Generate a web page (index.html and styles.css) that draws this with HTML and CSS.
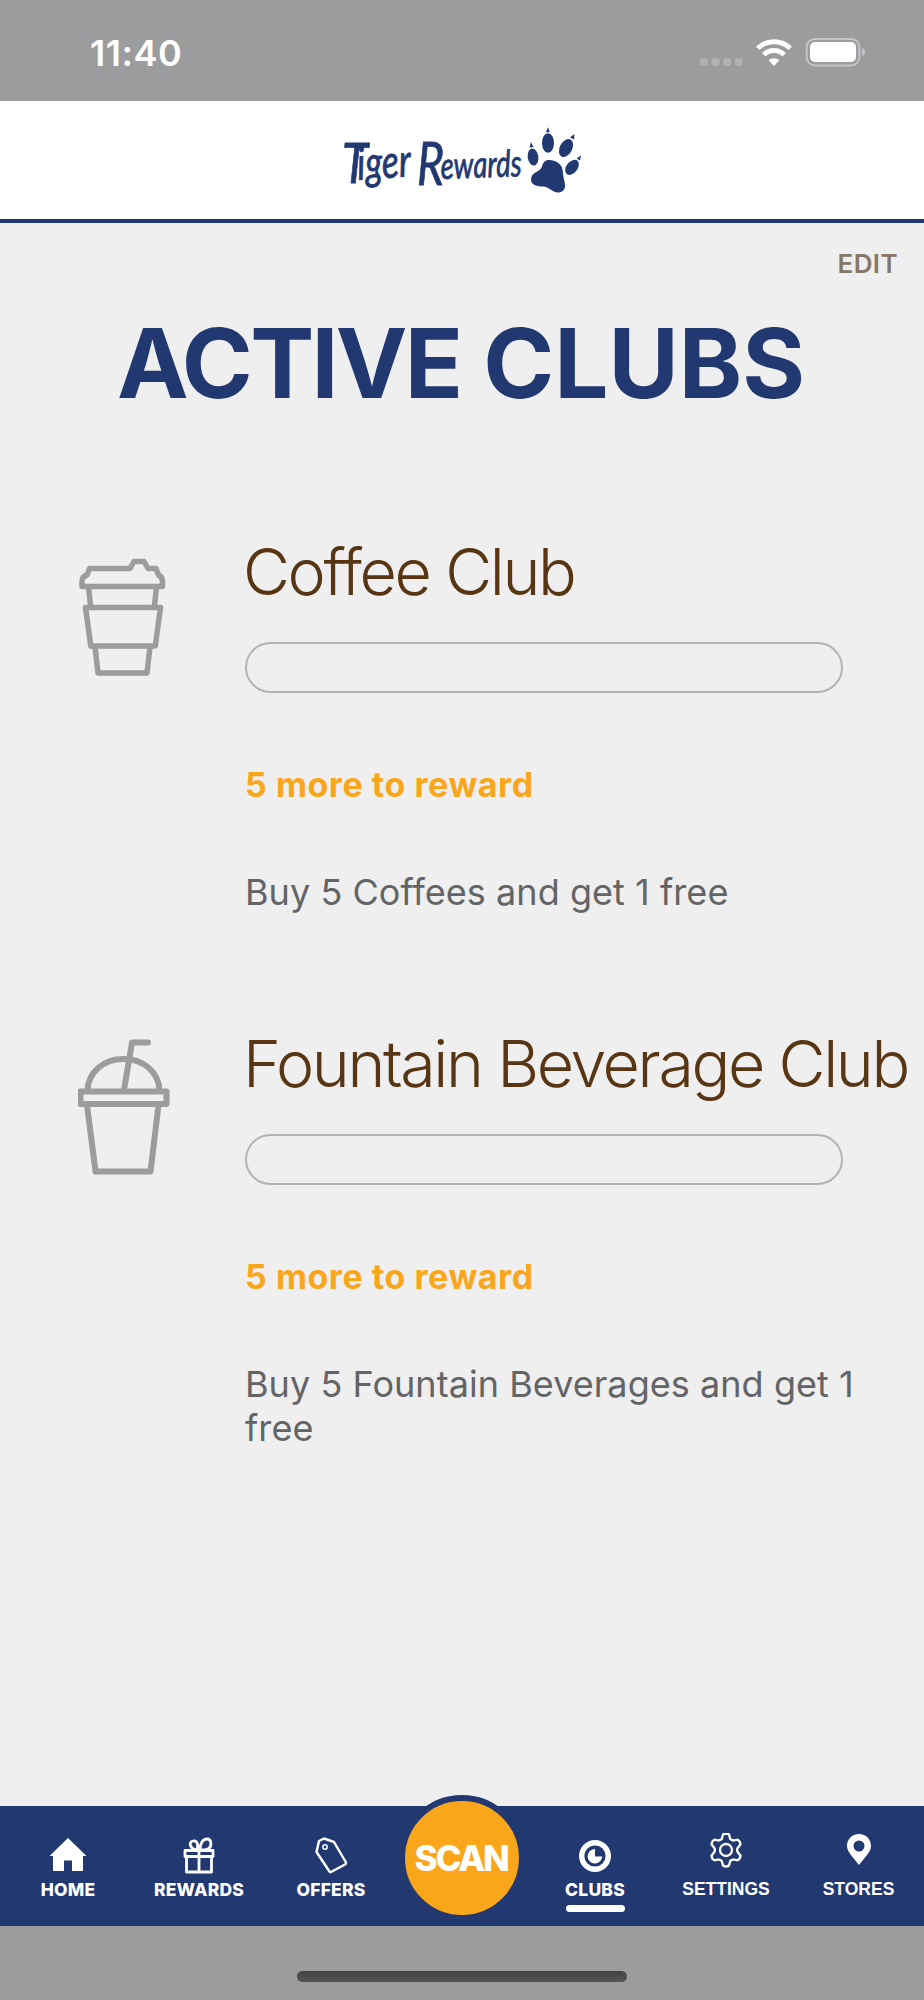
FILE: index.html
```html
<!DOCTYPE html>
<html lang="en">
<head>
    <meta charset="UTF-8">
    <meta name="viewport" content="width=device-width, initial-scale=1.0">
    <title>Tiger Rewards - Active Clubs</title>
    <link rel="stylesheet" href="styles.css">
</head>
<body>
    <div class="status-bar">
        <span class="time">11:40</span>
        <svg class="status-icons" width="168" height="32" viewBox="0 0 168 32">
            <g fill="#b0b1b3">
                <rect x="0" y="20" width="8" height="8" rx="3"/>
                <rect x="11.500" y="20" width="8" height="8" rx="3"/>
                <rect x="23" y="20" width="8" height="8" rx="3"/>
                <rect x="34.500" y="20" width="8" height="8" rx="3"/>
            </g>
            <g fill="none" stroke="#fff" stroke-width="5">
                <path d="M57.700 10.300a23.500 23.500 0 0 1 32.600 0"/>
                <path d="M63.800 16.700a14.800 14.800 0 0 1 20.400 0"/>
            </g>
            <path d="M68.500 22.300a8.500 8.500 0 0 1 11 0L74 28z" fill="#fff"/>
            <rect x="106.800" y="1" width="52.500" height="26.500" rx="8" fill="none" stroke="#c3c4c5" stroke-width="2"/>
            <rect x="110" y="4" width="46" height="20" rx="5" fill="#fff"/>
            <path d="M162 10q3 1 3 4t-3 4z" fill="#c3c4c5"/>
        </svg>
    </div>

    <header class="header">
        <svg class="logo" width="240" height="70" viewBox="0 0 240 70">
            <g class="logo-text">
                <text x="-4" y="57" font-size="57" textLength="26" lengthAdjust="spacingAndGlyphs">T</text>
                <text x="12" y="54" font-size="46" textLength="54" lengthAdjust="spacingAndGlyphs" transform="rotate(-4 12 54)">iger</text>
                <text x="71" y="59" font-size="60" textLength="27" lengthAdjust="spacingAndGlyphs">R</text>
                <text x="95" y="53" font-size="37" textLength="81" lengthAdjust="spacingAndGlyphs" transform="rotate(-2 95 53)">ewards</text>
            </g>
            <g fill="#223871">
                <ellipse cx="187" cy="31" rx="5.300" ry="8.600" transform="rotate(-8 187 31)"/>
                <ellipse cx="202" cy="17" rx="6" ry="9.800"/>
                <ellipse cx="220" cy="22" rx="6.200" ry="9.600" transform="rotate(28 220 22)"/>
                <ellipse cx="226" cy="41.300" rx="5.600" ry="8.500" transform="rotate(38 226 41.300)"/>
                <path d="M183.500 21.500l1.500-5.500 2.500 5zM199.800 6.200l2.200-5 1.800 5zM224 11.500l4.500-3.500-.500 5.500zM230.500 32.500l4.500-3-1 5z"/>
                <path d="M203 34c8 0 14 5 14 13 0 4 2 8 2 13 0 4-3 6.500-7 6.500-6 0-9-6-15-6-5 0-12-1-12-7 0-8 9-7 11-13 1-4 3-6.500 7-6.500z"/>
            </g>
        </svg>
    </header>

    <main class="content">
        <a class="edit" href="#">EDIT</a>
        <h1 class="title"><span class="title-tight">ACTIVE</span> CLUBS</h1>

        <section class="club">
            <div class="club-icon">
                <svg width="92" height="140" viewBox="0 0 92 140" fill="none" stroke="#9b9c9e" stroke-width="5.500" stroke-linejoin="round">
                    <path d="M4 35.500v-5q0-5 5-6.500l2.500-6.500H52l4-7H66l4 7h8l2.500 6.500q4 2 4 6.500v5z"/>
                    <path d="M10.500 36l2.200 20M78.500 36l-2.200 20M7.500 56.500h75l-5.200 38.500h-64.500zM17 96l3 26h49l3-26"/>
                </svg>
            </div>
            <div class="club-info">
                <h2 class="club-name">Coffee Club</h2>
                <div class="progress"></div>
                <p class="remaining">5 more to reward</p>
                <p class="description">Buy 5 Coffees and get 1 free</p>
            </div>
        </section>

        <section class="club">
            <div class="club-icon fountain">
                <svg width="92" height="140" viewBox="0 0 92 140" fill="none" stroke="#9b9c9e" stroke-width="6" stroke-linejoin="round" stroke-linecap="round">
                    <rect x="2.500" y="53.500" width="86" height="12.500"/>
                    <path d="M9.500 52c1-18 16-31 36-31s35 13 36 31M46 52l8-47.500h16M9 67l8.500 66.500h55l8-66.500"/>
                </svg>
            </div>
            <div class="club-info">
                <h2 class="club-name">Fountain Beverage Club</h2>
                <div class="progress"></div>
                <p class="remaining">5 more to reward</p>
                <p class="description">Buy 5 Fountain Beverages and get 1 free</p>
            </div>
        </section>
    </main>

    <nav class="tab-bar">
        <a class="tab" href="#">
            <svg width="38" height="40" viewBox="0 0 38 40" fill="#fff"><path d="M19 2L37.500 20H34v15H23V24.500h-8V35H4V20H.500z"/></svg>
            <span>HOME</span>
        </a>
        <a class="tab" href="#">
            <svg width="32" height="40" viewBox="0 0 32 40" fill="none" stroke="#fff" stroke-width="2.800" stroke-linejoin="round">
                <path d="M3.500 20.500h25v15.500h-25zM2 14.500h28v6H2zM16 14v22M14 14c-7-1-9-8-4-9 4-1 6 4 4 9zM17 14c0-7 3-11 7-11 5 0 5 8 1 10-2 1-5 1-8 1z"/>
            </svg>
            <span>REWARDS</span>
        </a>
        <a class="tab" href="#">
            <svg width="34" height="40" viewBox="0 0 34 40" fill="none" stroke="#fff" stroke-width="2.400" stroke-linejoin="round">
                <path d="M5 5l5-2.500L20 6l12 20.500q0 1.500-1 2L17 36q-1 .500-1.500-.500L2.500 16z"/>
                <circle cx="11" cy="11" r="2.200" stroke-width="1.500"/>
            </svg>
            <span>OFFERS</span>
        </a>
        <a class="scan" href="#">SCAN</a>
        <a class="tab active" href="#">
            <svg width="34" height="40" viewBox="0 0 34 40">
                <circle cx="17" cy="20" r="13.300" fill="none" stroke="#fff" stroke-width="5.400"/>
                <path d="M17 13a7.300 7.300 0 1 0 7.200 7.500H17z" fill="#fff"/>
            </svg>
            <span>CLUBS</span>
        </a>
        <a class="tab settings" href="#">
            <svg width="32" height="40" viewBox="0 0 32 40" fill="none" stroke="#fff" stroke-width="2.300" stroke-linejoin="round">
                <path d="M13 1.500Q16-.500 19 1.500l1.200 4.500q2 1.500 3.800 1.500l3.500-.800q2.500 1 3 4.500l-3 4q-.800 1.800 0 3.600l3 4q-.500 3.500-3 4.500l-3.500-.800q-2 0-3.800 1.500L19 32.500q-3 2-6 0L11.800 28q-2-1.500-3.800-1.500l-3.500.800q-2.500-1-3-4.500l3-4q.800-1.800 0-3.600l-3-4q.500-3.500 3-4.500L8 7.500q2 0 3.800-1.500z"/>
                <circle cx="16" cy="17" r="6"/>
            </svg>
            <span>SETTINGS</span>
        </a>
        <a class="tab stores" href="#">
            <svg width="26" height="40" viewBox="0 0 26 40"><path d="M13 1C6 1 1 6 1 13c0 6 6 11 12 19 6-8 12-13 12-19C25 6 20 1 13 1zm0 6.500a5.500 5.500 0 1 1 0 11 5.500 5.500 0 0 1 0-11z" fill="#fff" fill-rule="evenodd"/></svg>
            <span>STORES</span>
        </a>
    </nav>

    <div class="home-area"><div class="home-indicator"></div></div>
</body>
</html>
```

FILE: styles.css
```css
* {
    box-sizing: border-box;
}
body {
    margin: 0;
    width: 924px;
    height: 2000px;
    display: flex;
    flex-direction: column;
    overflow: hidden;
    background-color: #efefef;
    font-family: Inter, "Liberation Sans", sans-serif;
}
a {
    text-decoration: none;
}
.status-bar {
    height: 101px;
    padding: 0 56px 0 90px;
    display: flex;
    justify-content: space-between;
    background-color: #9b9c9e;
}
.time {
    margin-top: 31px;
    font-size: 36px;
    line-height: 44px;
    font-weight: 600;
    letter-spacing: 0.5px;
    color: #fff;
}
.status-icons {
    margin-top: 38px;
}
.header {
    height: 122px;
    padding: 25px 0 0 8px;
    background-color: #fff;
    border-bottom: 4px solid #223871;
    text-align: center;
}
.logo {
    overflow: visible;
}
.logo-text {
    font-family: Lato, sans-serif;
    font-style: italic;
    fill: #223871;
    stroke: #223871;
    stroke-width: 0.8px;
}
.content {
    flex: 1;
    display: flex;
    flex-direction: column;
}
.edit {
    align-self: flex-end;
    margin: 25px 26px 0 0;
    font-size: 26px;
    line-height: 32px;
    font-weight: 600;
    letter-spacing: 0.4px;
    color: #857866;
}
.title {
    margin: 25px 0 0;
    padding-right: 2px;
    font-size: 96px;
    line-height: 116px;
    font-weight: 700;
    letter-spacing: 0;
    text-align: center;
    white-space: nowrap;
    color: #223871;
}
.title-tight {
    letter-spacing: -2.7px;
}
.club {
    height: 492px;
    display: flex;
}
.title + .club {
    margin-top: 112px;
}
.club-icon {
    width: 245px;
    padding: 18px 0 0 78px;
}
.club-icon.fountain {
    padding-top: 13px;
}
.club-info {
    flex: 1;
    min-width: 0;
    font-variant-ligatures: none;
}
.club-name {
    margin: 0 0 0 -2px;
    padding-top: 0;
    font-size: 64.5px;
    line-height: 78px;
    font-weight: 300;
    letter-spacing: -2.4px;
    white-space: nowrap;
    color: #583614;
}
.progress {
    width: 598px;
    height: 51px;
    margin-top: 31px;
    border: 2px solid #b2b3b3;
    border-radius: 26px;
}
.remaining {
    margin: 70px 0 0;
    font-size: 34px;
    line-height: 44px;
    font-weight: 700;
    letter-spacing: 0.55px;
    color: #faa61a;
}
.description {
    width: 630px;
    margin: 63px 0 0;
    font-size: 36px;
    line-height: 44px;
    letter-spacing: 0.05px;
    color: #636466;
}
.tab-bar {
    height: 120px;
    display: grid;
    grid-template-columns: 136px 126px 138px 124px 142px 120px 138px;
    background-color: #223871;
}
.tab {
    display: flex;
    flex-direction: column;
    align-items: center;
    padding-top: 30px;
    font-size: 17.5px;
    line-height: 22px;
    font-weight: 800;
    letter-spacing: 0.2px;
    color: #fff;
}
.tab span {
    margin-top: 3px;
}
.settings,
.stores {
    padding-top: 27px;
    font-family: "Liberation Sans", sans-serif;
    letter-spacing: 0;
}
.stores {
    padding-left: 7px;
}
.settings span,
.stores span {
    margin-top: 5px;
}
.active::after {
    content: "";
    width: 59px;
    height: 7px;
    margin-top: 4px;
    border-radius: 4px;
    background-color: #fff;
}
.scan {
    align-self: start;
    justify-self: center;
    width: 126px;
    height: 126px;
    margin-top: -11px;
    border: 6px solid #223871;
    border-radius: 50%;
    background-color: #faa61a;
    font-size: 35px;
    line-height: 114px;
    font-weight: 800;
    letter-spacing: -2.2px;
    text-indent: -2px;
    text-align: center;
    color: #fff;
}
.home-area {
    height: 74px;
    padding-top: 45px;
    background-color: #9b9c9e;
}
.home-indicator {
    width: 330px;
    height: 11px;
    margin: 0 auto;
    border-radius: 6px;
    background: linear-gradient(#414342, #555);
}
```
